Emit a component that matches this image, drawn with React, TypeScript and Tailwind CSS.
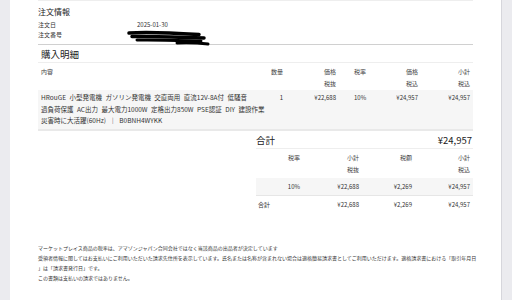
import React from "react";

const F = { fontFamily: '"Noto Sans CJK JP", "Noto Sans", sans-serif' };

function Scribble() {
  return (
    <svg
      className="absolute left-[-10px] top-0"
      width="84"
      height="17"
      viewBox="0 0 84 17"
      fill="none"
    >
      <path d="M2 3 C 20 1.5, 48 3, 72 4.5" stroke="#000" strokeWidth="3.5" strokeLinecap="round" />
      <path d="M5 6.5 C 30 6, 55 7, 77 8" stroke="#000" strokeWidth="3.5" strokeLinecap="round" />
      <path d="M10 10 C 30 9.5, 55 10.5, 74 11" stroke="#000" strokeWidth="3" strokeLinecap="round" />
      <path d="M50 13 C 62 12.5, 72 13, 81 14" stroke="#000" strokeWidth="3" strokeLinecap="round" />
    </svg>
  );
}

export default function App() {
  return (
    <div className="w-[512px] h-[300px] overflow-hidden flex bg-[#ebebef] text-[#333]" style={F}>
      <div className="w-[10px] shrink-0" />
      <div className="w-[492px] shrink-0 bg-white border-r border-[#d6d6dc] pl-[28px]">
        <div className="w-[435px] border-t border-[#eeeeee]">
          {/* 注文情報 */}
          <div className="pb-[4px] border-b border-[#d0d0d0]">
            <div className="pt-[5px] text-[8px] leading-[12px] text-[#222]">注文情報</div>
            <div className="mt-[2px] flex text-[6px] leading-[10px]">
              <div className="w-[99px]">注文日</div>
              <div>2025-01-30</div>
            </div>
            <div className="flex text-[6px] leading-[10px]">
              <div className="w-[99px]">注文番号</div>
              <div className="relative h-[10px] w-[80px]">
                <Scribble />
              </div>
            </div>
          </div>

          {/* 購入明細 */}
          <div className="pt-[2px] pl-[3px] text-[9.5px] leading-[15px] text-[#222] border-b border-[#eeeeee]">
            購入明細
          </div>

          {/* header */}
          <div className="flex pt-[3px] text-[6px] leading-[12px] text-[#444]">
            <div className="w-[220px] pl-[3px]">内容</div>
            <div className="w-[25px] text-right">数量</div>
            <div className="w-[53px] text-right">
              価格
              <br />
              税抜
            </div>
            <div className="w-[50px] pl-[18px]">税率</div>
            <div className="w-[32px] text-right">
              価格
              <br />
              税込
            </div>
            <div className="w-[52px] text-right">
              小計
              <br />
              税込
            </div>
          </div>

          {/* item row */}
          <div className="flex h-[41px] pt-[2px] bg-[#f6f6f6] border-b-2 border-[#e9e9e9] text-[6px] leading-[11.5px]">
            <div className="w-[220px] pl-[3px] whitespace-nowrap text-[6.5px] [word-spacing:2px]">
              <div>HRouGE 小型発電機 ガソリン発電機 交直両用 直流12V-8A付 低騒音</div>
              <div>過負荷保護 AC出力 最大電力1000W 定格出力850W PSE認証 DIY 建設作業</div>
              <div>災害時に大活躍(60Hz) ｜ B0BNH4WYKK</div>
            </div>
            <div className="w-[25px] text-right">1</div>
            <div className="w-[53px] text-right">¥22,688</div>
            <div className="w-[50px] pl-[18px]">10%</div>
            <div className="w-[32px] text-right">¥24,957</div>
            <div className="w-[52px] text-right">¥24,957</div>
          </div>

          {/* totals */}
          <div className="ml-auto w-[217px]">
            <div className="flex justify-between h-[18px] items-center text-[9.5px] leading-[14px] text-[#222] border-b border-[#eeeeee]">
              <div>合計</div>
              <div className="pr-[1px]">¥24,957</div>
            </div>

            <div className="flex pt-[3px] pb-[2px] text-[6px] leading-[12px] text-[#444]">
              <div className="w-[44px] text-right">税率</div>
              <div className="w-[59px] text-right">
                小計
                <br />
                税抜
              </div>
              <div className="w-[53px] text-right">税額</div>
              <div className="w-[58px] text-right">
                小計
                <br />
                税込
              </div>
            </div>

            <div className="flex h-[18px] items-center bg-[#f6f6f6] border-b border-[#e6e6e6] text-[6px] leading-[12px]">
              <div className="w-[44px] text-right">10%</div>
              <div className="w-[59px] text-right">¥22,688</div>
              <div className="w-[53px] text-right">¥2,269</div>
              <div className="w-[58px] text-right">¥24,957</div>
            </div>

            <div className="flex h-[18px] items-center text-[6px] leading-[12px]">
              <div className="w-[44px] pl-[2px]">合計</div>
              <div className="w-[59px] text-right">¥22,688</div>
              <div className="w-[53px] text-right">¥2,269</div>
              <div className="w-[58px] text-right">¥24,957</div>
            </div>
          </div>

          {/* footer */}
          <div className="mt-[29px] text-[5px] leading-[10px] text-[#333] whitespace-nowrap">
            <div>マーケットプレイス商品の税率は、アマゾンジャパン合同会社ではなく当該商品の出品者が決定しています</div>
            <div>
              受領者情報に関してはお支払いにご利用いただいた請求先住所を表示しています。氏名または名称が含まれない場合は適格簡易請求書としてご利用いただけます。適格請求書における「取引年月日
            </div>
            <div>」は「請求書発行日」です。</div>
            <div>この書類は支払いの請求ではありません。</div>
          </div>
        </div>
      </div>
      <div className="flex-1" />
    </div>
  );
}
